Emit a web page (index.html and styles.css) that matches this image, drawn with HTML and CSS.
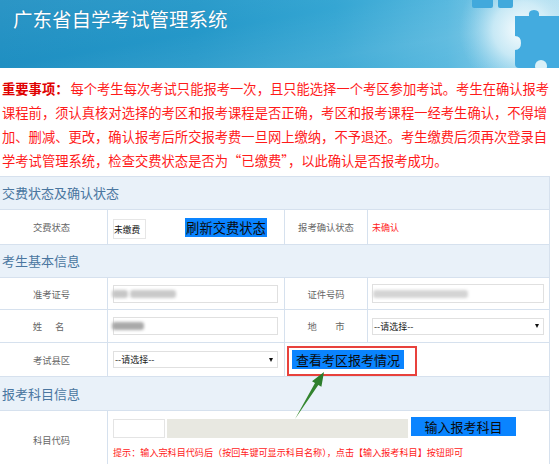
FILE: index.html
```html
<!DOCTYPE html>
<html lang="zh-CN">
<head>
<meta charset="utf-8">
<title>广东省自学考试管理系统</title>
<link rel="stylesheet" href="styles.css">
</head>
<body>
<header class="hd">
  <h1 class="title">广东省自学考试管理系统</h1>
  <svg class="puzzle" width="110" height="68" viewBox="0 0 110 68">
    <defs>
      <radialGradient id="glow" cx="72" cy="30" r="62" gradientUnits="userSpaceOnUse">
        <stop offset="0" stop-color="#ffffff" stop-opacity="0.95"/>
        <stop offset="0.45" stop-color="#dff3fa" stop-opacity="0.75"/>
        <stop offset="1" stop-color="#9fd7ee" stop-opacity="0"/>
      </radialGradient>
    </defs>
    <rect x="0" y="0" width="110" height="68" fill="url(#glow)"/>
    <path d="M23 0 H44 V6 Q44 8 42 8 H25 Q23 8 23 6 Z" fill="#41a9dc"/>
    <path d="M49 0 H64 V6 Q64 8 62 8 H51 Q49 8 49 6 Z" fill="#41a9dc"/>
    <path d="M66 16 H80 Q79 10 85 10 Q91 10 90 16 H110 V68 H70 Q66 68 66 64 V50 Q72 50 72 43 Q72 36 66 36 Z" fill="#43abdf"/>
    <circle cx="92" cy="66" r="6" fill="#d9f0f8"/>
  </svg>
</header>

<p class="notice"><b class="key">重要事项：</b>每个考生每次考试只能报考一次，且只能选择一个考区参加考试。考生在确认报考课程前，须认真核对选择的考区和报考课程是否正确，考区和报考课程一经考生确认，不得增加、删减、更改，确认报考后所交报考费一旦网上缴纳，不予退还。考生缴费后须再次登录自学考试管理系统，检查交费状态是否为“已缴费”，以此确认是否报考成功。</p>

<div class="form">
  <div class="band b1">交费状态及确认状态</div>
  <div class="row r1">
    <div class="lbl c1">交费状态</div>
    <div class="val c2">
      <div class="box paid">未缴费</div>
      <span class="btn refresh">刷新交费状态</span>
    </div>
    <div class="lbl c3">报考确认状态</div>
    <div class="val c4 red">未确认</div>
  </div>

  <div class="band b2">考生基本信息</div>
  <div class="row ra">
    <div class="lbl c1">准考证号</div>
    <div class="val c2"><div class="box wide"><span class="blur bl1"></span><span class="blur bl2"></span></div></div>
    <div class="lbl c3">证件号码</div>
    <div class="val c4"><div class="box wide tall"><span class="blur bl3"></span></div></div>
  </div>
  <div class="row rb">
    <div class="lbl c1 nm">姓<i class="gap"></i>名</div>
    <div class="val c2"><div class="box wide"><span class="blur bl4"></span></div></div>
    <div class="lbl c3">地　　市</div>
    <div class="val c4"><div class="sel wide tall"><span>--请选择--</span><i class="caret"></i></div></div>
  </div>
  <div class="row rc">
    <div class="lbl c1">考试县区</div>
    <div class="val c2"><div class="sel wide"><span>--请选择--</span><i class="caret"></i></div></div>
    <div class="val c34">
      <div class="mark"><span class="btn view">查看考区报考情况</span></div>
    </div>
  </div>

  <div class="band b3">报考科目信息</div>
  <div class="row rl">
    <div class="lbl c1">科目代码</div>
    <div class="val cspan">
      <div class="line">
        <div class="box code"></div>
        <div class="box name"></div>
        <span class="btn add">输入报考科目</span>
      </div>
      <p class="hint">提示：输入完科目代码后（按回车键可显示科目名称），点击【输入报考科目】按钮即可</p>
    </div>
  </div>
</div>

<svg class="arrow" width="559" height="464" viewBox="0 0 559 464">
  <defs>
    <linearGradient id="ag" x1="295" y1="419" x2="324" y2="372" gradientUnits="userSpaceOnUse">
      <stop offset="0" stop-color="#3c8f34"/>
      <stop offset="1" stop-color="#2a7a2a"/>
    </linearGradient>
  </defs>
  <polygon points="324,372 312,381.2 315,383.1 295,419 318.3,385 321.4,386.8" fill="url(#ag)"/>
</svg>
</body>
</html>
```

FILE: styles.css
```css
* { box-sizing: border-box; }

html, body {
  margin: 0;
  padding: 0;
}

body {
  width: 559px;
  height: 464px;
  overflow: hidden;
  position: relative;
  background: #ffffff;
  font-family: "Noto Sans CJK SC", "Noto Sans", "Liberation Sans", sans-serif;
  color: #333;
}

/* header */
.hd {
  position: relative;
  height: 68px;
  overflow: hidden;
  background:
    linear-gradient(170deg, rgba(255,255,255,0.06) 0%, rgba(255,255,255,0) 40%, rgba(255,255,255,0.08) 70%, rgba(255,255,255,0) 100%),
    linear-gradient(90deg, #1f8fc2 0%, #2598c9 35%, #35a6d3 60%, #55b7de 80%, #84cbe8 92%, #b5e0f1 100%);
}

.title {
  margin: 0;
  padding: 6px 0 0 13px;
  font-size: 19.5px;
  line-height: 26px;
  font-weight: normal;
  color: #ffffff;
  text-shadow: 0 0 1px rgba(0, 40, 80, 0.35);
  position: relative;
}

.puzzle {
  position: absolute;
  right: 0;
  top: 0;
}

/* notice */
.notice {
  margin: 9px 0 3px;
  padding: 0 2px;
  width: 552px;
  font-size: 13.3px;
  line-height: 24px;
  color: #ff1a1a;
}

.key {
  color: #e00000;
  font-weight: bold;
  margin-right: 2px;
}

/* form */
.form {
  width: 550px;
  border-top: 1px solid #d6e1ee;
  border-right: 1px solid #d6e1ee;
}

.band {
  height: 33px;
  background: #e9f1f9;
  border-bottom: 1px solid #d6e1ee;
  padding-left: 2px;
  font-size: 13px;
  line-height: 32px;
  color: #4a76a0;
}

.b3 { height: 34px; line-height: 33px; }

.row {
  display: grid;
  grid-template-columns: 108px 177px 83px 181px;
  border-bottom: 1px solid #d6e1ee;
  background: #ffffff;
}

.r1 { height: 35px; }
.ra { height: 32px; }
.rb { height: 33px; }
.rc { height: 34px; }
.rl { height: 58px; border-bottom: none; }

.c1, .c2, .c3 { border-right: 1px solid #d6e1ee; }

.lbl {
  display: flex;
  align-items: center;
  justify-content: center;
  font-size: 9.3px;
  color: #666;
  white-space: pre;
}

.c1 { padding-right: 4px; }
.c1.nm { padding-right: 10px; }

.gap {
  display: inline-block;
  width: 13px;
}

.val {
  display: flex;
  align-items: center;
  font-size: 9px;
}

.c2 { padding-left: 5px; }
.c4 { padding-left: 4px; }

.red { color: #ff2020; }

.box {
  height: 18px;
  border: 1px solid #e0e0e0;
  background: #fff;
  display: flex;
  align-items: center;
}

.paid {
  width: 33px;
  height: 20px;
  font-size: 8.7px;
  color: #111;
  border-color: #e6e6e6;
  margin-top: 4px;
}

.wide { width: 165px; }
.c4 .wide { width: 172px; }
.tall { height: 19px; }

.blur {
  display: inline-block;
  height: 8px;
  background: #b9b9b9;
  filter: blur(1.4px);
  border-radius: 3px;
}

.bl1 { width: 16px; margin-left: -2px; background: #c6c6c6; }
.bl2 { width: 46px; margin-left: 2px; background: #c9c9c9; }
.bl3 { width: 95px; background: #d4d4d4; }
.bl4 { width: 32px; margin-left: -2px; background: #a9a9a9; }

.sel {
  height: 17px;
  border: 1px solid #e0e0e0;
  display: flex;
  align-items: center;
  justify-content: space-between;
  padding: 0 4px 0 1px;
  font-size: 9px;
  color: #222;
}

.caret {
  width: 0;
  height: 0;
  border-left: 2.5px solid transparent;
  border-right: 2.5px solid transparent;
  border-top: 4px solid #111;
}

.btn {
  display: inline-block;
  background: #0a84ff;
  color: #0b0b0b;
  font-size: 13.3px;
  line-height: 19px;
  height: 19px;
  white-space: nowrap;
}

.refresh {
  width: 82px;
  margin-left: 39px;
  margin-top: 1px;
  text-align: center;
}

.c34 {
  grid-column: 3 / 5;
  align-items: flex-end;
  padding-left: 2px;
}

.mark {
  border: 2px solid #e8413c;
  width: 130px;
  height: 30px;
  padding: 2px 0 0 3px;
}

.view {
  width: 112px;
  font-size: 13px;
  text-align: center;
}

.cspan {
  grid-column: 2 / 5;
  flex-direction: column;
  align-items: flex-start;
  padding: 6px 0 0 5px;
}

.line {
  display: flex;
  align-items: flex-start;
}

.code {
  width: 52px;
  height: 19px;
  margin-top: 2px;
  border-color: #e4e4e4;
}

.name {
  width: 241px;
  height: 19px;
  margin: 2px 0 0 2px;
  background: #e8e8e1;
  border-color: #e8e8e1;
}

.add {
  width: 105px;
  margin-left: 3px;
  font-size: 13px;
  text-align: center;
}

.hint {
  margin: 8px 0 0;
  font-size: 9.1px;
  line-height: 12px;
  color: #ff1a1a;
  white-space: nowrap;
}

.arrow {
  position: absolute;
  left: 0;
  top: 0;
  pointer-events: none;
}
```
